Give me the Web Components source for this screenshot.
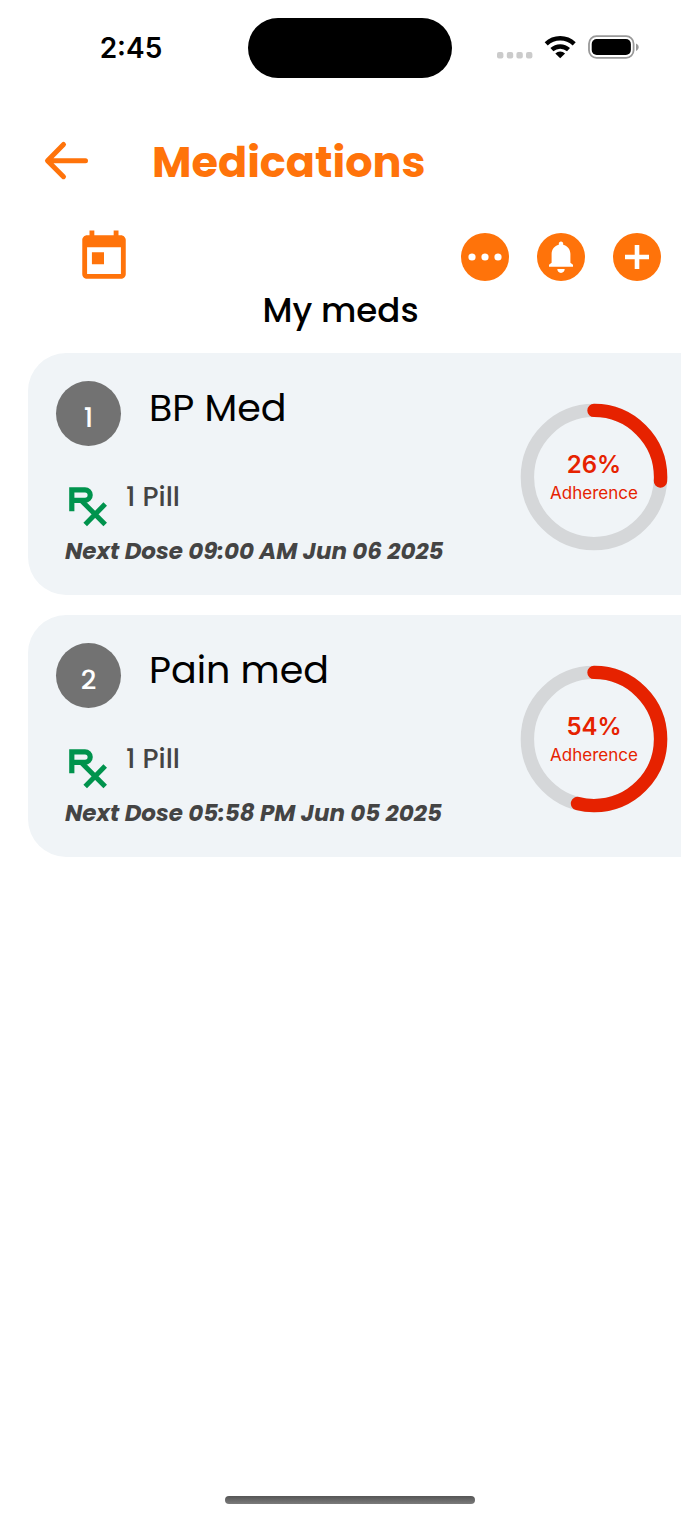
<!DOCTYPE html>
<html lang="en">
<head>
<meta charset="utf-8">
<meta name="viewport" content="width=device-width, initial-scale=1">
<title>Medications</title>
<style>
  body { margin: 0; background: #fff; color: #000; font-family: Poppins, Inter, "Liberation Sans", sans-serif; }
</style>
</head>
<body>
<med-app></med-app>

<script>
// Registers a custom element whose shadow root is cloned from the given markup.
const define = (name, html, setup) => {
  const template = document.createElement("template");
  template.innerHTML = html;
  customElements.define(name, class extends HTMLElement {
    connectedCallback() {
      if (this.shadowRoot) return;
      const content = template.content.cloneNode(true);
      if (setup) setup(this, content);
      this.attachShadow({ mode: "open" }).append(content);
    }
  });
};

define("status-bar", `
  <style>
    :host { display: grid; grid-template-columns: 1fr 204px 1fr; align-items: center; height: 60px; padding: 18px 0; }
    time { justify-self: center; padding-left: 14px; font: 600 28px/34px Inter, sans-serif; }
    .island { height: 60px; border-radius: 30px; background: #000; }
    .signals { display: flex; justify-content: flex-end; padding-right: 60px; }
  </style>
  <time>2:45</time>
  <div class="island"></div>
  <div class="signals">
    <svg width="144" height="28" viewBox="0 0 144 28" aria-hidden="true">
      <g fill="#cbcbcb">
        <rect x="1" y="18" width="6.4" height="6.4" rx="2"/><rect x="10.8" y="18" width="6.4" height="6.4" rx="2"/>
        <rect x="20.4" y="18" width="6.4" height="6.4" rx="2"/><rect x="30" y="18" width="6.4" height="6.4" rx="2"/>
      </g>
      <g fill="none" stroke="#000" stroke-width="4.4">
        <path d="M50.2 9.9a20.2 20.2 0 0 1 28 0"/>
        <path d="M55.9 15.7a12.2 12.2 0 0 1 16.6 0"/>
      </g>
      <path d="M64.2 24.3l-4.9-4.9a7.2 7.2 0 0 1 9.8 0z"/>
      <rect x="93" y="2.2" width="44.6" height="21.6" rx="7.5" fill="none" stroke="#999" stroke-width="1.8"/>
      <rect x="95.7" y="5" width="39.2" height="16" rx="5"/>
      <path d="M140 9.5c3.6 1.4 3.6 6 0 7.4z" fill="#999"/>
    </svg>
  </div>
`);

define("page-header", `
  <style>
    :host { display: flex; align-items: center; gap: 60px; padding: 32px 40px 0; color: #ff730a; }
    button { display: grid; padding: 0; border: 0; background: none; color: inherit; }
    h1 { margin: 0; font-size: 43px; line-height: 68px; font-weight: 700; }
  </style>
  <button type="button" aria-label="Back">
    <svg width="52" height="44" viewBox="0 0 52 44" fill="none" stroke="currentColor" stroke-width="5" stroke-linecap="round" stroke-linejoin="round"><path d="M23.5 4.500L7.500 20.700l16 16M8 20.700h37.500"/></svg>
  </button>
  <h1><slot></slot></h1>
`);

define("icon-button", `
  <style>
    :host { display: block; }
    button { display: grid; place-items: center; width: 48px; height: 48px; padding: 0; border: 0; border-radius: 50%; background: #ff730a; }
  </style>
  <button type="button"><slot></slot></button>
`, (host, content) => content.querySelector("button").setAttribute("aria-label", host.getAttribute("label")));

define("action-bar", `
  <style>
    :host { display: flex; align-items: center; gap: 28px; padding: 0 39px 0 75px; }
    .calendar { display: grid; margin-right: auto; padding: 0; border: 0; background: none; color: #ff730a; }
  </style>
  <button class="calendar" type="button" aria-label="Calendar">
    <svg width="58" height="58" viewBox="0 0 24 24" fill="currentColor"><path d="M19 3h-1V1h-2v2H8V1H6v2H5c-1.11 0-1.99.9-1.99 2L3 19c0 1.1.89 2 2 2h14c1.1 0 2-.9 2-2V5c0-1.1-.9-2-2-2zm0 16H5V8h14v11zM7 10h5v5H7z"/></svg>
  </button>
  <icon-button label="More">
    <svg width="48" height="48" viewBox="0 0 48 48" fill="#fff"><circle cx="11" cy="24" r="3.6"/><circle cx="24" cy="24" r="3.6"/><circle cx="37" cy="24" r="3.6"/></svg>
  </icon-button>
  <icon-button label="Reminders">
    <svg width="48" height="48" viewBox="0 0 48 48" fill="#fff"><path d="M24 8.5c-1.3 0-2.2 1-2.2 2.2v1c-4.3 1-7.2 4.6-7.2 9v9.1L12 31.8v2h24v-2l-2.600-2v-9.100c0-4.400-2.900-8-7.200-9v-1c0-1.200-.9-2.200-2.200-2.200zM20.300 36h7.400c0 2.200-1.500 3.900-3.700 3.900s-3.700-1.700-3.700-3.900z"/></svg>
  </icon-button>
  <icon-button label="Add medication">
    <svg width="48" height="48" viewBox="0 0 48 48" fill="#fff"><path d="M21.7 12h4.6v9.7H36v4.6h-9.7V36h-4.6v-9.7H12v-4.6h9.7z"/></svg>
  </icon-button>
`);

define("adherence-ring", `
  <style>
    :host { display: grid; place-items: center; width: 148px; height: 148px; color: #e62200; font-family: Inter, sans-serif; text-align: center; }
    svg, .label { grid-area: 1 / 1; }
    .label { padding-top: 4px; }
    strong { display: block; font-size: 24px; line-height: 28px; font-weight: 600; }
    span { display: block; font-size: 17px; line-height: 28px; }
  </style>
  <svg width="148" height="148" viewBox="0 0 148 148" fill="none" stroke-width="13.4" aria-hidden="true">
    <circle cx="74" cy="74" r="66.6" stroke="#d5d7d9"/>
    <circle class="value" cx="74" cy="74" r="66.6" pathLength="100" stroke="currentColor" stroke-linecap="round" transform="rotate(-90 74 74)"/>
  </svg>
  <div class="label"><strong></strong><span>Adherence</span></div>
`, (host, content) => {
  const value = host.getAttribute("value");
  content.querySelector("strong").textContent = value + "%";
  content.querySelector(".value").setAttribute("stroke-dasharray", value + " 100");
});

define("med-card", `
  <style>
    :host { display: flex; align-items: center; justify-content: space-between; padding: 28px 13px 26px 28px; border-radius: 38px 0 0 38px; background: #f0f4f7; }
    .title { display: flex; gap: 28px; }
    .badge { display: grid; place-items: center; box-sizing: border-box; width: 65px; height: 65px; padding-top: 8px; border-radius: 50%; background: #727272; color: #fff; font-size: 27px; line-height: 32px; font-weight: 500; }
    h3 { margin: 0; font-size: 38px; line-height: 54px; font-weight: 400; }
    .dose { display: flex; align-items: flex-start; gap: 18px; padding: 32px 0 0 12px; color: #444; }
    .dose span { font-size: 27px; line-height: 38px; font-weight: 500; }
    .rx { margin-top: 9px; }
    .next { margin: 5px 0 0; padding-left: 9px; color: #444; font-size: 23px; line-height: 36px; font-weight: 700; font-style: italic; }
    adherence-ring { margin-top: 4px; }
  </style>
  <div>
    <div class="title"><div class="badge"></div><h3><slot name="name"></slot></h3></div>
    <div class="dose">
      <svg class="rx" width="40" height="41" viewBox="0 0 40 41" fill="none" stroke="#00934d" stroke-width="5.2" role="img" aria-label="Prescription">
        <path d="M3.8 24.3V2.9H17a5.2 5.2 0 0 1 0 10.4H3.8"/><path stroke-width="5" d="M13.5 13.7L37.2 37.500M37.200 17L17.200 37.500"/>
      </svg>
      <span><slot name="dose"></slot></span>
    </div>
    <p class="next"><slot name="next"></slot></p>
  </div>
  <adherence-ring></adherence-ring>
`, (host, content) => {
  content.querySelector(".badge").textContent = host.getAttribute("number");
  content.querySelector("adherence-ring").setAttribute("value", host.getAttribute("adherence"));
});

define("home-indicator", `
  <style>
    :host { display: block; margin-top: auto; padding-bottom: 13px; }
    div { width: 250px; height: 8px; margin: 0 auto; border-radius: 4px; background: linear-gradient(#555, #7b7b7b); }
  </style>
  <div></div>
`);

define("med-app", `
  <style>
    :host { display: flex; flex-direction: column; min-height: 100vh; }
    action-bar { padding-top: 32px; }
    main { padding-right: 19px; }
    h2 { margin: 0; font-size: 34px; line-height: 48px; font-weight: 500; text-align: center; }
    .list { display: grid; gap: 20px; padding: 19px 0 20px 28px; }
  </style>
  <status-bar></status-bar>
  <page-header>Medications</page-header>
  <action-bar></action-bar>
  <main>
    <h2>My meds</h2>
    <div class="list">
      <med-card number="1" adherence="26">
        <span slot="name">BP Med</span><span slot="dose">1 Pill</span><span slot="next">Next Dose 09:00 AM Jun 06 2025</span>
      </med-card>
      <med-card number="2" adherence="54">
        <span slot="name">Pain med</span><span slot="dose">1 Pill</span><span slot="next">Next Dose 05:58 PM Jun 05 2025</span>
      </med-card>
    </div>
  </main>
  <home-indicator></home-indicator>
`);
</script>
</body>
</html>
